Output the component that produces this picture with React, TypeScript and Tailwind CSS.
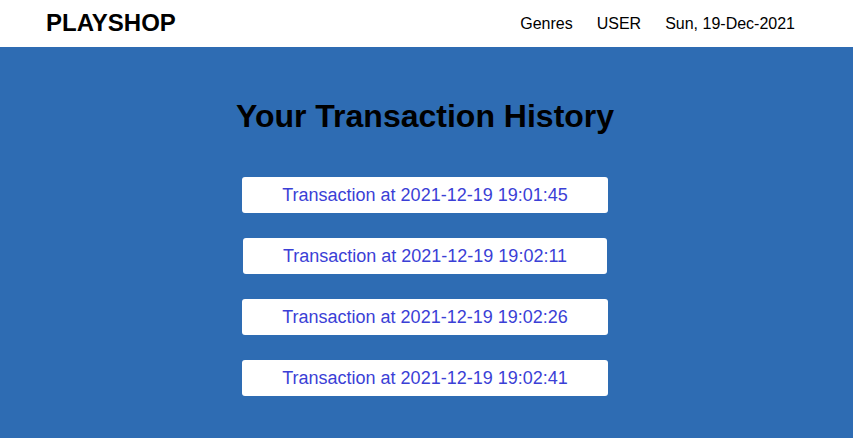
const transactions = [
  '2021-12-19 19:01:45',
  '2021-12-19 19:02:11',
  '2021-12-19 19:02:26',
  '2021-12-19 19:02:41',
];

export default function App() {
  return (
    <div className="min-h-screen bg-[#2e6cb3] font-['Liberation_Sans',Arial,sans-serif]">
      <header className="h-[47px] bg-white flex items-center justify-between pl-[46px] pr-[58px]">
        <span className="text-[24px] font-bold text-black leading-[28px] -mt-[2px]">PLAYSHOP</span>
        <nav className="flex items-center gap-[24px] text-[16px] text-black">
          <span>Genres</span>
          <span>USER</span>
          <span>Sun, 19-Dec-2021</span>
        </nav>
      </header>

      <main className="flex flex-col items-center pt-[49px] pr-[3px]">
        <h1 className="text-[32px] font-bold text-black leading-[40px]">Your Transaction History</h1>
        <div className="flex flex-col items-center gap-[25px] mt-[41px]">
          {transactions.map((t) => (
            <button
              key={t}
              className="h-[36px] px-[40px] bg-white rounded-[3px] text-[18px] text-[#3b3fd6]"
            >
              Transaction at {t}
            </button>
          ))}
        </div>
      </main>
    </div>
  );
}
